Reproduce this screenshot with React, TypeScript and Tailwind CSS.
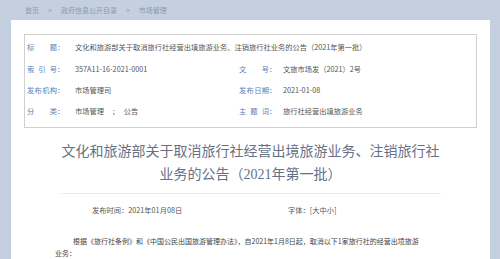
import React from 'react';

const sans = { fontFamily: '"Noto Sans CJK SC", "Liberation Sans", sans-serif' };

// label with characters spread over a fixed width, colon after
const Label: React.FC<{ chars: string[] }> = ({ chars }) => (
  <span className="flex items-center text-[#5b80b8]">
    <span className="flex w-[30px] justify-between">
      {chars.map((c, i) => (
        <span key={i}>{c}</span>
      ))}
    </span>
    <span>：</span>
  </span>
);

const Row: React.FC<{ label: string[]; value: string; label2?: string[]; value2?: string; h?: string }> = ({
  label,
  value,
  label2,
  value2,
  h = 'h-[21px]'
}) => (
  <div className={`flex items-center ${h}`}>
    <div className="flex items-center">
      <span className="w-[50px] pl-[2px]">
        <Label chars={label} />
      </span>
      <span className={label2 ? 'w-[164px] text-[#555]' : 'text-[#555]'}>{value}</span>
    </div>
    {label2 && (
      <div className="flex items-center">
        <span className="w-[44px]">
          <Label chars={label2} />
        </span>
        <span className="text-[#555]">{value2}</span>
      </div>
    )}
  </div>
);

export default function App() {
  return (
    <div className="flex h-[259px] w-[500px] flex-col overflow-hidden bg-[#c4d0e0]" style={sans}>
      <div className="flex h-[20px] shrink-0 items-center gap-[9px] pl-[25px] text-[7px] text-[#8d99ac]">
        <span>首页</span>
        <span>&gt;</span>
        <span>政府信息公开目录</span>
        <span>&gt;</span>
        <span>市场管理</span>
      </div>

      <div className="ml-[11px] w-[479px] flex-1 bg-white pt-[14px]">
        <div className="mx-[13px] h-[94px] border border-[#d0d0d0] pt-[1px] text-[7.25px]">
          <Row
            h="h-[23px]"
            label={['标', '题']}
            value="文化和旅游部关于取消旅行社经营出境旅游业务、注销旅行社业务的公告（2021年第一批）"
          />
          <Row label={['索', '引', '号']} value="357A11-16-2021-0001" label2={['文', '号']} value2="文旅市场发（2021）2号" />
          <Row label={['发', '布', '机', '构']} value="市场管理司" label2={['发', '布', '日', '期']} value2="2021-01-08" />
          <Row
            label={['分', '类']}
            value="市场管理　 ;　 公告"
            label2={['主', '题', '词']}
            value2=" 旅行社经营出境旅游业务"
          />
        </div>

        <h1
          className="mt-[12px] text-center text-[14px] leading-[23px] font-normal text-[#667186]"
          style={{ fontFamily: '"Liberation Serif", "Noto Sans CJK SC", serif' }}
        >
          文化和旅游部关于取消旅行社经营出境旅游业务、注销旅行社
          <br />
          业务的公告（2021年第一批）
        </h1>

        <div className="mx-auto mt-[7px] h-px w-[380px] bg-[#ebebeb]" />

        <div className="mt-[10px] flex h-[12px] items-center text-[7.25px] text-[#555]">
          <span className="ml-[81px] w-[196px]">发布时间：2021年01月08日</span>
          <span>字体：[大中小]</span>
        </div>

        <p className="mt-[19px] pl-[44px] text-[7px] leading-[12px] text-[#444]">
          <span className="pl-[18px]">根据《旅行社条例》和《中国公民出国旅游管理办法》，自2021年1月8日起，取消以下1家旅行社的经营出境旅游</span>
          <br />
          业务：
        </p>
      </div>
    </div>
  );
}
